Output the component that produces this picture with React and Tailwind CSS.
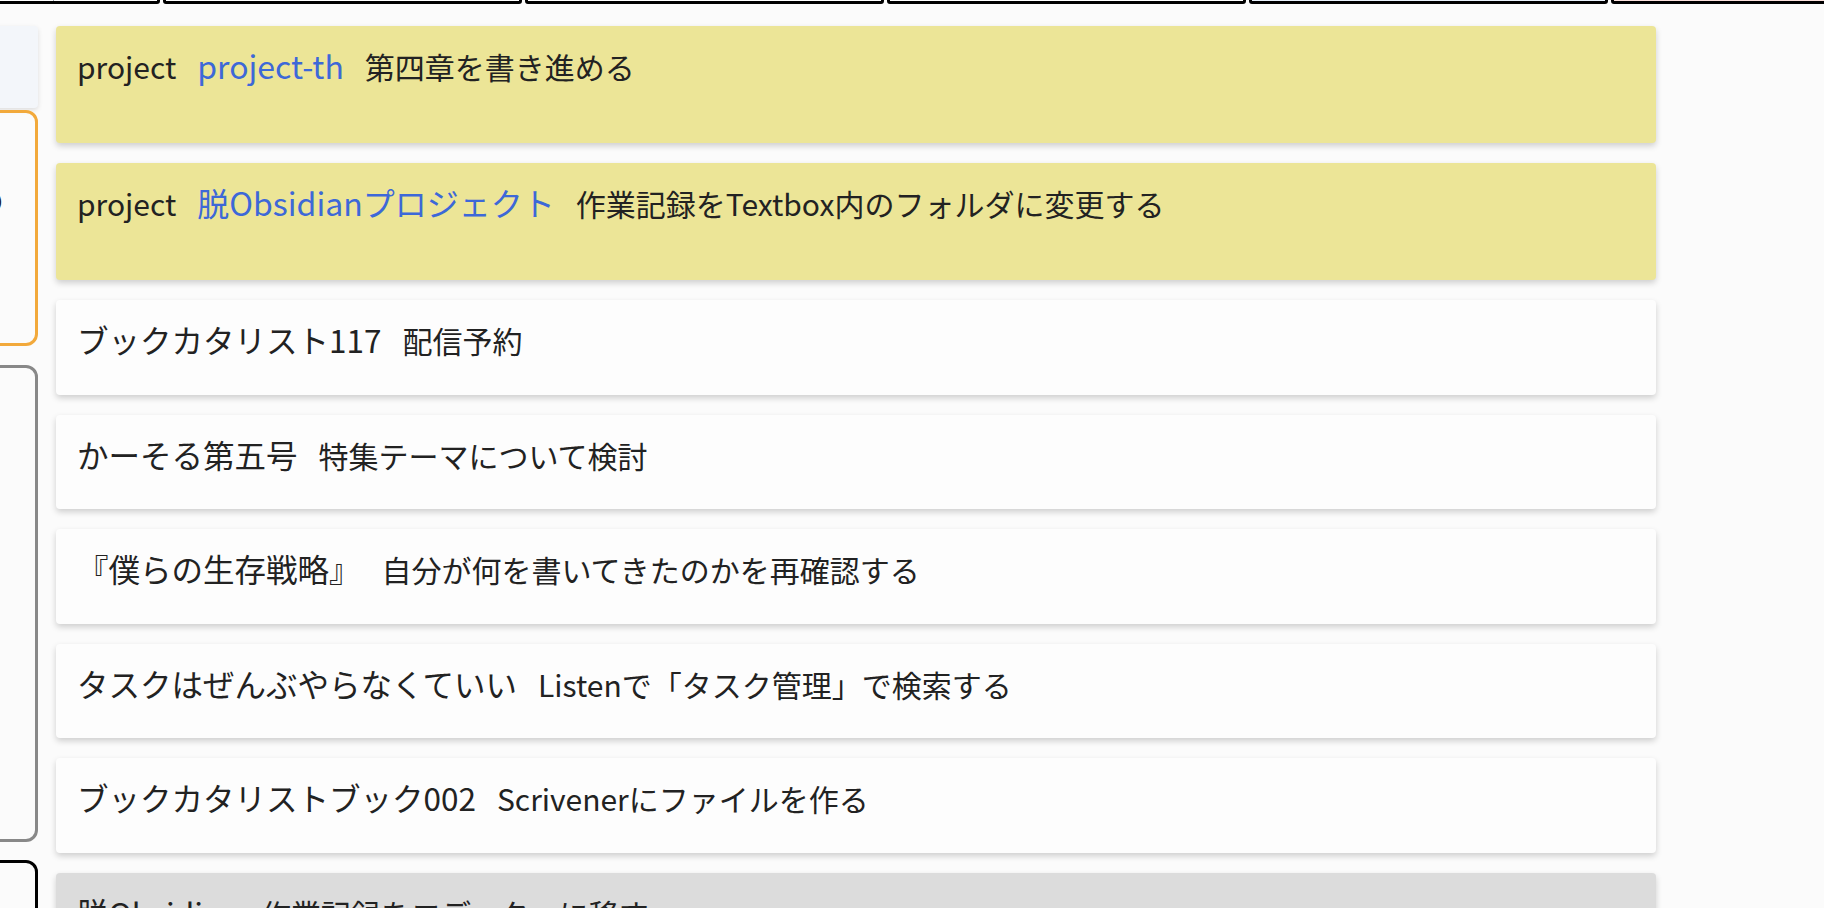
import React from 'react';

const tasks = [
  { id: 1, kind: 'project', label: 'project', project: 'project-th', text: '第四章を書き進める' },
  { id: 2, kind: 'project', label: 'project', project: '脱Obsidianプロジェクト', text: '作業記録をTextbox内のフォルダに変更する' },
  { id: 3, kind: 'normal', title: 'ブックカタリスト117', text: '配信予約' },
  { id: 4, kind: 'normal', title: 'かーそる第五号', text: '特集テーマについて検討' },
  { id: 5, kind: 'normal', title: '『僕らの生存戦略』', text: '自分が何を書いてきたのかを再確認する' },
  { id: 6, kind: 'normal', title: 'タスクはぜんぶやらなくていい', text: 'Listenで「タスク管理」で検索する' },
  { id: 7, kind: 'normal', title: 'ブックカタリストブック002', text: 'Scrivenerにファイルを作る' },
  { id: 8, kind: 'done', title: '脱Obsidian', text: '作業記録をエディターに移す' },
];

const TaskCard = ({ task }) => {
  if (task.kind === 'project') {
    return (
      <div className="h-[117px] shrink-0 rounded-[4px] bg-[#ece597] px-[21px] pt-[19px] shadow-[0_3px_6px_rgba(0,0,0,0.18)]">
        <div className="flex items-baseline gap-[21px] leading-[40px] whitespace-nowrap">
          <span className="text-[30px] text-[#222]">{task.label}</span>
          <span className="text-[32px] text-[#3d68d8]">{task.project}</span>
          <span className="text-[30px] text-[#222]">{task.text}</span>
        </div>
      </div>
    );
  }
  const bg = task.kind === 'done' ? 'bg-[#dcdcdc]' : 'bg-[#fdfdfd]';
  return (
    <div className={`h-[94.5px] shrink-0 rounded-[4px] ${bg} px-[21px] pt-[19px] shadow-[0_3px_6px_rgba(0,0,0,0.18)]`}>
      <div className="flex items-baseline gap-[21px] leading-[40px] whitespace-nowrap text-[#222]">
        <span className="text-[31.5px]">{task.title}</span>
        <span className="text-[30px]">{task.text}</span>
      </div>
    </div>
  );
};

const TopBox = ({ fill = 'bg-white', children }) => (
  <div className={`relative h-[60px] w-[359px] shrink-0 rounded-[3px] border-[3px] border-black ${fill}`}>{children}</div>
);

export default function App() {
  return (
    <div className="h-[908px] overflow-hidden bg-[#fbfbfb] font-['Noto_Sans_CJK_JP','Noto_Sans',sans-serif]">
      {/* columns scrolled up out of view */}
      <div className="-mt-[56px] -ml-[199px] flex gap-[3px]">
        <TopBox>
          <div className="absolute bottom-0 left-[249px] h-[3px] w-px bg-gray-400" />
        </TopBox>
        <TopBox />
        <TopBox />
        <TopBox />
        <TopBox fill="bg-[#e9f1fb]" />
        <TopBox fill="bg-[#fbe1dd]" />
      </div>

      <div className="flex pt-[22px]">
        {/* side column */}
        <div className="flex w-[38px] shrink-0 flex-col">
          <div className="-ml-[202px] h-[82px] w-[240px] rounded-[4px] bg-[#f3f6fa] shadow-[0_2px_5px_rgba(0,0,0,0.12)]" />
          <div className="-ml-[202px] mt-[2px] h-[236px] w-[240px] rounded-[12px] border-[3px] border-[#f2a93b] pt-[66px] pr-[31px] text-right text-[32px] leading-[40px] text-[#222]">
            の
          </div>
          <div className="-ml-[202px] mt-[19px] h-[477px] w-[240px] rounded-[12px] border-[3px] border-[#888]" />
          <div className="-ml-[202px] mt-[18px] h-[200px] w-[240px] rounded-[12px] border-[3px] border-black" />
        </div>

        {/* task list */}
        <div className="ml-[18px] flex w-[1600px] flex-col gap-[20px]">
          {tasks.map((t) => (
            <TaskCard key={t.id} task={t} />
          ))}
        </div>
      </div>
    </div>
  );
}
